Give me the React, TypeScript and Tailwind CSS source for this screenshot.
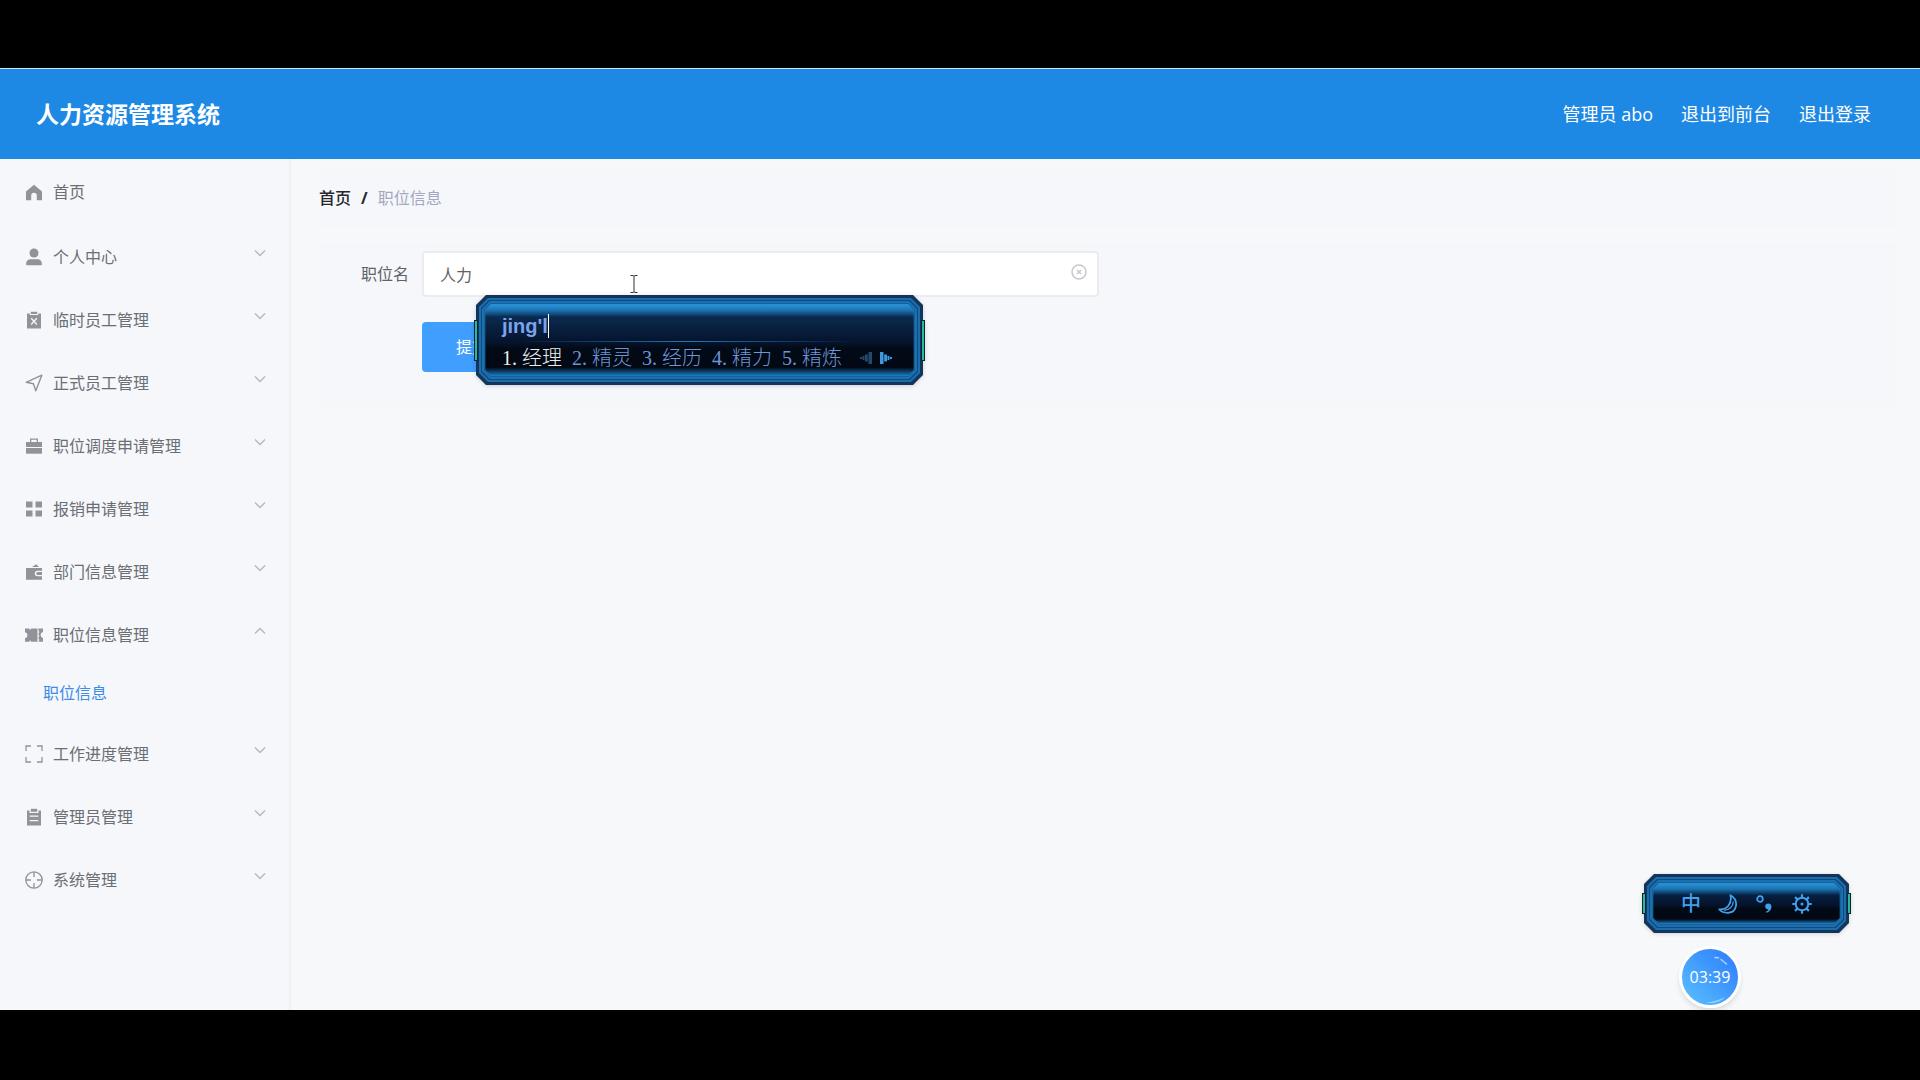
import { useId, useState } from 'react'
import type { ReactNode } from 'react'

interface MenuItem {
  label: string
  icon: ReactNode
  children?: string[]
}

const MENU: MenuItem[] = [
  {
    label: '个人中心',
    icon: (
      <>
        <circle cx="9" cy="5" r="4.5" />
        <path d="M1.2 17.2v-1.7c0-2.6 1.7-4.3 4.2-4.3h7.2c2.500 0 4.200 1.700 4.200 4.300v1.700z" />
      </>
    ),
    children: ['个人信息'],
  },
  {
    label: '临时员工管理',
    icon: (
      <>
        <path
          fillRule="evenodd"
          d="M2 2.500h2.800V4h8.400V2.500H16V17.500H2zM5.700 7.700l2.300 2.600-2.300 2.600 1 1L9 11.300l2.300 2.600 1-1-2.300-2.600 2.300-2.600-1-1L9 9.300 6.700 6.700z"
        />
        <path d="M5.800.8h6.400V3H5.800z" />
      </>
    ),
    children: ['临时员工'],
  },
  {
    label: '正式员工管理',
    icon: <path d="M1.200 8.300 16.800 1.200 10.800 16.800 8.400 9.800z" fill="none" stroke="currentColor" strokeWidth="1.400" strokeLinejoin="round" />,
    children: ['正式员工'],
  },
  {
    label: '职位调度申请管理',
    icon: (
      <>
        <path fillRule="evenodd" d="M5 1.500h8V5h4v5H1V5h4zM6.300 2.800V5h5.400V2.800z" />
        <path d="M1 11h16v5.700H1z" />
      </>
    ),
    children: ['职位调度申请'],
  },
  {
    label: '报销申请管理',
    icon: <path d="M1 1.500h6.500v6H1zM10.500 1.500H17v6h-6.500zM1 10.500h6.500v6H1zM10.500 10.500H17v6h-6.500z" />,
    children: ['报销申请'],
  },
  {
    label: '部门信息管理',
    icon: (
      <>
        <path fillRule="evenodd" d="M1 5h16v2.800h-4.500a2.700 2.700 0 0 0 0 5.400H17v3.600H1zM12.800 9H17v3h-4.200a1.500 1.500 0 0 1 0-3z" />
        <path d="M7 4l4.200-2.800L14 4z" />
      </>
    ),
    children: ['部门信息'],
  },
  {
    label: '职位信息管理',
    icon: (
      <>
        <path d="M0 2.500h4.200l1 1.500 1-1.500h6.300v13.300H6.200l-1-1.500-1 1.500H0v-3.600c1.600-.4 2.400-1.500 2.400-3s-.8-2.600-2.400-3z" />
        <path d="M13.500 2.500H18v3.600c-1.500.4-2.300 1.500-2.300 3s.8 2.600 2.300 3v3.700h-4.500l.8-1.700-1-2 1-2-1-2 1-2-1-2z" />
      </>
    ),
    children: ['职位信息'],
  },
  {
    label: '工作进度管理',
    icon: <path d="M1 6V1h5M12 1h5v5M17 12v5h-5M6 17H1v-5" fill="none" stroke="currentColor" strokeWidth="1.300" />,
    children: ['工作进度'],
  },
  {
    label: '管理员管理',
    icon: (
      <>
        <path fillRule="evenodd" d="M2 2.500h2.500V5h9V2.500H16V17.500H2zM4.700 7.500v1.200h8.600V7.500zM4.700 12v1.200h8.600V12z" />
        <path d="M5.800.8h6.400v3H5.800z" />
      </>
    ),
    children: ['管理员'],
  },
  {
    label: '系统管理',
    icon: (
      <>
        <circle cx="9" cy="9" r="8.200" fill="none" stroke="currentColor" strokeWidth="1.300" />
        <path d="M9 1v5M9 12v5M1 9h5M12 9h5" fill="none" stroke="currentColor" strokeWidth="1.300" />
      </>
    ),
    children: ['轮播图管理'],
  },
]

const CANDIDATES = ['经理', '精灵', '经历', '精力', '精炼']

function Icon({ children }: { children: ReactNode }) {
  return (
    <svg viewBox="0 0 18 18" className="size-[18px] shrink-0 text-[#909399]" fill="currentColor" aria-hidden="true">
      {children}
    </svg>
  )
}

function Chevron({ open }: { open: boolean }) {
  return (
    <svg
      viewBox="0 0 12 8"
      className={`ml-auto mb-2 h-2 w-3 text-[#b4b8bf] ${open ? 'rotate-180' : ''}`}
      fill="none"
      stroke="currentColor"
      strokeWidth="1.400"
      aria-hidden="true"
    >
      <path d="M1 1.500l5 5 5-5" />
    </svg>
  )
}

function octagon(w: number, h: number, inset: number, cut: number) {
  const r = w - inset
  const b = h - inset
  return `M${inset + cut} ${inset}H${r - cut}L${r} ${inset + cut}V${b - cut}L${r - cut} ${b}H${inset + cut}L${inset} ${b - cut}V${inset + cut}z`
}

interface NeonFrameProps {
  w: number
  h: number
  barTop: number
  barHeight: number
  glow: string
  glowEnd: number
}

// Neon frame shared by the input method windows
function NeonFrame({ w, h, barTop, barHeight, glow, glowEnd }: NeonFrameProps) {
  const id = useId()
  return (
    <svg viewBox={`0 0 ${w} ${h}`} className="absolute inset-0 size-full overflow-visible drop-shadow-sm" aria-hidden="true">
      <defs>
        <linearGradient id={id} x1="0" y1="0" x2="0" y2="1">
          <stop offset="0" stopColor="#2c96d8" />
          <stop offset={glowEnd / 2} stopColor="#1b72b2" />
          <stop offset={glowEnd} stopColor={glow} />
          <stop offset="0.550" stopColor="#05122a" />
          <stop offset="0.620" stopColor="#020a16" />
          <stop offset="0.880" stopColor="#020914" />
          <stop offset="0.950" stopColor="#0f4a7c" />
          <stop offset="1" stopColor="#1f7dbd" />
        </linearGradient>
      </defs>
      <path d={octagon(w, h, 0, 10)} fill="#15345a" />
      <path d={octagon(w, h, 3, 9)} fill="#1b6dab" />
      <path d={octagon(w, h, 5, 8)} fill="#0c4a80" />
      <path d={octagon(w, h, 6, 8)} fill="#1a70b0" />
      <path d={octagon(w, h, 8, 7)} fill="#12568f" />
      <path d={octagon(w, h, 9, 6)} fill={`url(#${id})`} />
      <path d={octagon(w, h, 9, 6)} fill="none" stroke="#2185c6" strokeOpacity="0.500" />
      <path d={`M-2 ${barTop}h4v${barHeight}h-4zM${w - 2} ${barTop}h4v${barHeight}h-4z`} fill="#06263a" />
      <path d={`M-1 ${barTop + 1}h2v${barHeight - 2}h-2zM${w - 1} ${barTop + 1}h2v${barHeight - 2}h-2z`} fill="#2bb89a" />
    </svg>
  )
}

function CandidateWindow() {
  return (
    <div className="absolute left-[476px] top-[295px] h-[90px] w-[447px]">
      <NeonFrame w={447} h={90} barTop={25} barHeight={41} glow="#0b2a4e" glowEnd={0.18} />
      <div className="relative flex h-full flex-col justify-center gap-1 px-[26px] pt-1">
        <div className="flex items-center">
          <span className="font-['Liberation_Sans',sans-serif] text-xl leading-7 font-bold text-[#7ba3ee]">jing'l</span>
          <span className="h-6 w-px bg-white" />
        </div>
        <span className="absolute left-10 right-16 top-[46px] h-px bg-gradient-to-r from-transparent via-[#1f78b8] to-transparent" />
        <div className="flex items-center">
          <ol className="flex font-['Liberation_Serif','Noto_Sans_CJK_SC',serif] text-xl leading-7 font-light text-[#6f95d6]">
            {CANDIDATES.map((word, i) => (
              <li key={word} className={`flex w-[70px] ${i === 0 ? 'text-[#ececec]' : ''}`}>
                <span className="w-5">{i + 1}.</span>
                <span>{word}</span>
              </li>
            ))}
          </ol>
          <div className="ml-2 flex gap-2">
            <button type="button" aria-label="上一页">
              <svg viewBox="0 0 12 12" className="size-3" fill="#24496f">
                <path d="M8.500 0H12v12H8.500zM5 2.500h2.800v7H5zM2.500 4h2v4h-2zM0 5h2v2H0z" />
              </svg>
            </button>
            <button type="button" aria-label="下一页">
              <svg viewBox="0 0 12 12" className="size-3" fill="#3f97e0">
                <path d="M0 0h3.500v12H0zM4.200 2.500H7v7H4.200zM7.500 4h2v4h-2zM10 5h2v2h-2z" />
              </svg>
            </button>
          </div>
        </div>
      </div>
    </div>
  )
}

function ImeToolbar() {
  return (
    <div className="absolute left-[1644px] top-[874px] h-[59px] w-[205px]">
      <NeonFrame w={205} h={59} barTop={19} barHeight={21} glow="#06203f" glowEnd={0.3} />
      <div className="relative flex h-full items-center justify-center gap-[17px] text-[#41a0ea]">
        <button type="button" className="w-5 text-xl leading-5 font-medium">中</button>
        <button type="button" aria-label="半角" className="w-5">
          <svg viewBox="0 0 20 20" className="size-5" fill="none" stroke="currentColor" strokeWidth="1.800" strokeLinejoin="round">
            <path d="M12.500 1.200C21 6 19.500 18.500 10 18.800c-4 .1-7-1.300-8.800-3.500 3.600.3 6.800-.5 9-3.300 2.600-3.200 3.200-6.800 2.300-10.800z" />
            <path d="M6 16.300c5.500-.5 9-4 9.300-8.800" strokeWidth="1.300" />
          </svg>
        </button>
        <button type="button" aria-label="中文标点" className="w-5">
          <svg viewBox="0 0 20 20" className="size-5">
            <circle cx="5" cy="5" r="2.800" fill="none" stroke="currentColor" strokeWidth="1.800" />
            <path d="M13.200 9.500c1.900 0 3.300 1.200 3.300 3.300 0 3-2 5.200-5.200 6l-.5-1.100c1.600-.6 2.400-1.300 2.600-2.300-1.900.1-3.200-1-3.200-2.800 0-1.900 1.300-3.100 3-3.100z" fill="currentColor" />
          </svg>
        </button>
        <button type="button" aria-label="设置" className="w-5">
          <svg viewBox="0 0 20 20" className="size-5 overflow-visible" fill="none" stroke="currentColor">
            <circle cx="10" cy="10" r="6.300" strokeWidth="2" />
            <path d="M10 .3v3.500M10 16.200v3.500M.3 10h3.500M16.200 10h3.500M3.100 3.100l2.500 2.500M14.400 14.400l2.500 2.500M3.100 16.900l2.500-2.500M14.400 5.600l2.500-2.500" strokeWidth="2.200" />
            <circle cx="10" cy="10" r="1.500" fill="currentColor" stroke="none" />
          </svg>
        </button>
      </div>
    </div>
  )
}

function RecordTimer() {
  return (
    <div className="absolute left-[1679px] top-[946px] flex size-[62px] items-center justify-center rounded-full border-[3px] border-white bg-gradient-to-tr from-[#5cc0ff] to-[#2f78fb] shadow-md">
      <svg viewBox="0 0 56 56" className="absolute inset-0 size-full" aria-hidden="true">
        <path d="M33 8.500l3.500.3M39 10.500l5.500 4.500" fill="none" stroke="#a9d3ff" strokeWidth="1.500" strokeLinecap="round" />
        <path d="M24 53.500c8-1 13-2.500 19-5.500-4 4.500-11 7.500-19 5.500z" fill="#8fd0ff" />
      </svg>
      <span className="relative text-base text-white">03:39</span>
    </div>
  )
}

export default function App() {
  const [openMenu, setOpenMenu] = useState('职位信息管理')
  const [name, setName] = useState('人力')

  return (
    <div className="relative flex min-h-screen flex-col bg-black pt-[68px] pb-[70px] font-['Open_Sans','Noto_Sans_CJK_SC',sans-serif]">
      <header className="flex h-[91px] items-center justify-between border-t border-[#cfe6fa] bg-[#1e88e5] pr-[49px] pl-9 text-white">
        <h1 className="text-[23px] leading-8 font-bold">人力资源管理系统</h1>
        <nav className="flex gap-7 text-lg">
          <span>管理员 abo</span>
          <a href="#front">退出到前台</a>
          <a href="#logout">退出登录</a>
        </nav>
      </header>

      <div className="flex flex-1 bg-[#f7f8fa]">
        <aside className="w-[291px] shrink-0 border-r-2 border-[#f0f1f4] bg-[#f5f7fb] text-base text-[#6b6e74]">
          <a href="#home" className="flex h-[66px] items-center gap-2.5 pl-[25px]">
            <Icon>
              <path d="M9 1.800l8 6.700v8.700h-5.200v-4.700a2.800 2.800 0 0 0-5.600 0v4.700H1V8.500z" />
            </Icon>
            首页
          </a>
          {MENU.map((item) => {
            const open = item.label === openMenu
            return (
              <div key={item.label}>
                <button
                  type="button"
                  aria-expanded={open}
                  onClick={() => setOpenMenu(open ? '' : item.label)}
                  className="flex h-[63px] w-full items-center gap-2.5 pr-[23px] pl-[25px]"
                >
                  <Icon>{item.icon}</Icon>
                  {item.label}
                  <Chevron open={open} />
                </button>
                {open &&
                  item.children?.map((child) => (
                    <a key={child} href="#position" className="flex h-14 items-center pb-0.5 pl-[43px] text-[#3f8ce8]">
                      {child}
                    </a>
                  ))}
              </div>
            )
          })}
        </aside>

        <main className="flex-1 pt-2 pr-6 pl-7">
          <nav className="flex h-[60px] items-center gap-2.5 bg-[#f5f7fb] pt-0.5 text-base" aria-label="面包屑">
            <a href="#home" className="font-medium text-[#25282d]">首页</a>
            <span className="font-bold text-[#25282d]">/</span>
            <span className="text-[#a3a9c0]">职位信息</span>
          </nav>

          <form className="mt-4 flex flex-col gap-[25px] bg-[#f5f7fb] pt-2 pb-9" onSubmit={(e) => e.preventDefault()}>
            <div className="flex items-center">
              <label htmlFor="position-name" className="w-[103px] pr-[13px] text-right text-base text-[#606266]">
                职位名
              </label>
              <div className="relative w-[677px]">
                <input
                  id="position-name"
                  value={name}
                  onChange={(e) => setName(e.target.value)}
                  className="h-[46px] w-full rounded border-2 border-[#eaecf1] bg-white pr-10 pl-4 text-base text-[#606266] outline-none"
                />
                <button type="button" aria-label="清空" onClick={() => setName('')} className="absolute top-[13px] right-3 size-4">
                  <svg viewBox="0 0 16 16" className="size-4" fill="none" stroke="#c5c8ce" strokeWidth="1.500">
                    <circle cx="8" cy="8" r="7" />
                    <path d="M6 6l4 4M10 6l-4 4" />
                  </svg>
                </button>
              </div>
            </div>
            <button type="submit" className="ml-[103px] h-[50px] w-[100px] rounded bg-[#409eff] text-base text-white">
              提交
            </button>
          </form>
        </main>
      </div>

      <svg viewBox="0 0 8 18" className="absolute left-[630px] top-[275px] h-[18px] w-2" fill="none" stroke="#333" aria-hidden="true">
        <path d="M.5.500h2.500l1 .8 1-.8h2.500M4 1.300v15.400M.5 17.500h2.500l1-.8 1 .8h2.500" />
      </svg>
      <CandidateWindow />
      <ImeToolbar />
      <RecordTimer />
    </div>
  )
}
